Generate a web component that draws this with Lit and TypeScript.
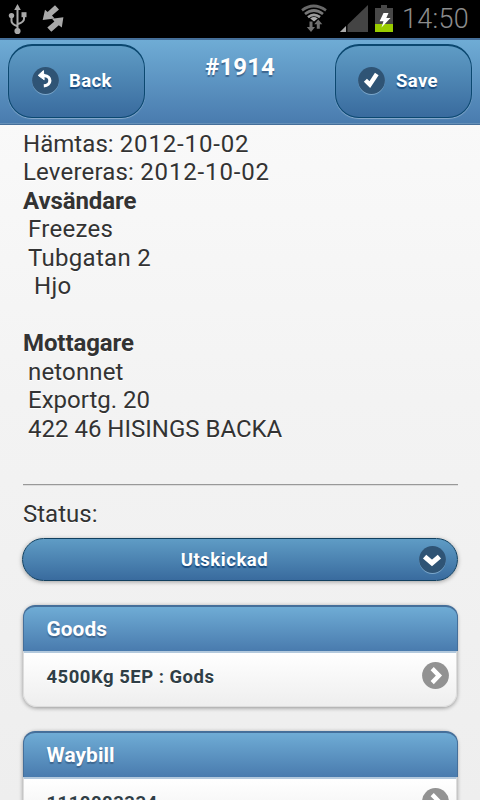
import { LitElement, html, css, svg } from "lit";
import { customElement } from "lit/decorators.js";

const glyphs = {
  back: svg`<path d="M9.5 8.6 H12.4 C19.8 9 19.8 18.4 11.8 18.9" stroke-width="3.2"/><path d="M6.2 8.4 L11.4 3.6 L12.2 12.8 Z" fill="#fff"/>`,
  check: svg`<path d="M7.4 13.2 L11.8 17.6 L18.8 7" stroke-width="4.4"/>`,
  down: svg`<path d="M5.6 10.6 L13 17 L20.4 10.6" stroke-width="5"/>`,
  right: svg`<path d="M10.2 6.6 L17 13.6 L10.2 20.6" stroke-width="4.4"/>`,
};

const disc = (name: keyof typeof glyphs, tone = "dark") => html`
  <svg class="disc ${tone}" width="27" height="28" viewBox="0 0 27 28">
    <circle class="edge" cx="13.5" cy="14.6" r="13.3" />
    <circle class="face" cx="13.5" cy="13.5" r="13.4" />
    <g fill="none" stroke="#fff">${glyphs[name]}</g>
  </svg>
`;

const details = [
  { text: "Hämtas:", date: "2012-10-02" },
  { text: "Levereras:", date: "2012-10-02", kind: "wide" },
  { text: "Avsändare", kind: "strong" },
  { text: "Freezes", kind: "in" },
  { text: "Tubgatan 2", kind: "in" },
  { text: "Hjo", kind: "in2" },
  { text: "" },
  { text: "Mottagare", kind: "strong" },
  { text: "netonnet", kind: "in snug" },
  { text: "Exportg. 20", kind: "in tight" },
  { text: "422 46 HISINGS BACKA", kind: "in tight" },
];

const lists = [
  { title: "Goods", item: "4500Kg 5EP : Gods" },
  { title: "Waybill", item: "1110003334" },
];

@customElement("app-root")
export class AppRoot extends LitElement {
  static styles = css`
    :host {
      display: block;
      height: 800px;
      overflow: hidden;
      font-family: Roboto, "Liberation Sans", sans-serif;
      color: #333;
      background: linear-gradient(#f9f9f9 120px, #f3f3f3 400px, #eee 800px);
    }
    * { box-sizing: border-box; }
    svg { display: block; flex: none; }
    .status {
      height: 38px;
      background: #000;
      display: flex;
      align-items: flex-start;
      justify-content: space-between;
    }
    .clock {
      width: 78px;
      font-size: 27px;
      line-height: 39px;
      color: #8c8c8c;
      font-weight: 300;
      letter-spacing: 0.3px;
    }
    .tray { display: flex; }
    header {
      height: 87px;
      padding: 4px 8px 0 8px;
      display: flex;
      justify-content: space-between;
      border-top: 2px solid #456f9a;
      border-bottom: 1px solid #456f9a;
      background: linear-gradient(#6facd5, #497bae);
      box-shadow: inset 0 -1px #6590b8;
      color: #fff;
    }
    h1 {
      margin: 9px 0 0;
      font-size: 24px;
      line-height: 28px;
      font-weight: 700;
      letter-spacing: 0.1px;
      text-shadow: 0 2px 1px #3e6790;
    }
    .btn {
      width: 137px;
      height: 74px;
      border: 1px solid #0b4870;
      border-top-width: 2px;
      border-radius: 24px;
      background: linear-gradient(#5f9cc5, #396b9e);
      box-shadow: 0 1px 1px rgba(255, 255, 255, 0.35);
      display: flex;
      align-items: center;
      padding: 0 0 1px 22.5px;
      gap: 10.5px;
      font-size: 18.5px;
      font-weight: 700;
      letter-spacing: 0.4px;
      text-shadow: 0 2px 1px #194b7e;
    }
    .disc .face { fill: #2f5475; }
    .disc .edge { fill: #7ba7cb; }
    .disc.grey .face { fill: #929292; }
    .disc.grey .edge { fill: none; }
    main { padding: 4.6px 22px 0 23px; }
    .line {
      height: 28.5px;
      font-size: 24px;
      line-height: 28.5px;
      letter-spacing: 0.3px;
      text-shadow: 0 1px 0 #fff;
      white-space: pre;
    }
    .dated { letter-spacing: 0.05px; }
    .wide { letter-spacing: 0.18px; }
    .date { letter-spacing: 0.85px; }
    .strong { font-weight: 700; letter-spacing: -0.1px; }
    .in { padding-left: 5px; }
    .in2 { padding-left: 11px; }
    .snug { letter-spacing: 0.15px; }
    .tight { letter-spacing: 0; }
    hr {
      margin: 41px 0 0;
      border: 0;
      height: 2px;
      background: linear-gradient(#999 50%, #ddd 50%);
    }
    .label { margin-top: 14px; letter-spacing: 0; }
    .select {
      margin: 9.5px 0 0 -1px;
      height: 43px;
      border: 1px solid #11405f;
      border-radius: 22px;
      background: linear-gradient(#5f9cc5, #396b9e);
      box-shadow: 0 1px 4px rgba(0, 0, 0, 0.35);
      display: flex;
      align-items: center;
      padding: 0 11px 0 0;
      color: #fff;
      font-size: 18.5px;
      font-weight: 700;
      letter-spacing: 0.55px;
      text-shadow: 0 2px 1px #194b7e;
    }
    .select span { flex: 1; text-align: center; padding: 0 0 0 7px; }
    .card {
      margin: 23.5px 1px 0 0;
      height: 102px;
      border-radius: 14px;
      box-shadow: 0 1px 4px rgba(0, 0, 0, 0.4);
    }
    .card + .card { margin-top: 24px; }
    .card h2 {
      margin: 0 -1px 0 0;
      height: 46px;
      padding-left: 22.5px;
      border: 1px solid #456f9a;
      border-top: 2px solid #456f9a;
      border-bottom: 0;
      border-radius: 12px 12px 0 0;
      background: linear-gradient(#6facd5, #497bae);
      color: #fff;
      font-size: 20.8px;
      line-height: 44px;
      letter-spacing: 0.1px;
      text-shadow: 0 2px 1px #3e6790;
    }
    .row {
      height: 56px;
      border: 1px solid #ddd;
      border-top: 2px solid #b3c9dd;
      border-radius: 0 0 14px 14px;
      background: linear-gradient(#fff, #eee);
      display: flex;
      justify-content: space-between;
      align-items: flex-start;
      padding: 9px 7px 0 22.5px;
      font-size: 18.5px;
      line-height: 30px;
      font-weight: 700;
      letter-spacing: 0.5px;
      text-shadow: 0 1px #fff;
      color: #2f3e46;
    }
  `;

  render() {
    return html`
      <div class="status">
        <svg width="70" height="38" viewBox="0 0 70 38">
          <g fill="none" stroke="#a9a9a9" stroke-width="2">
            <path d="M17.5 9 V30 M11.5 17 V21 Q11.5 24 17 26 M24 16 V19 Q24 22 18 24" />
          </g>
          <g fill="#a9a9a9">
            <path d="M17.5 4 L20.8 10 H14.2 Z" />
            <circle cx="11.5" cy="15.6" r="2.7" />
            <rect x="21.5" y="12.2" width="5" height="5" />
            <circle cx="17.5" cy="31" r="3.1" />
            <path d="M55 5.3 L59 9.4 L52 15.4 L54.6 18.4 L42.7 20 L45 9.8 L47.6 12 Z" />
            <path d="M51.3 31.8 L47.3 27.6 L54.4 21.6 L52 18.8 L63.4 17.3 L61.8 27.6 L58.8 25.2 Z" />
          </g>
        </svg>
        <div class="tray">
          <svg width="103" height="38" viewBox="300 0 103 38">
            <g fill="none" stroke="#686868" stroke-width="2.7">
              <path d="M303 10.3 Q314.5 1.7 327 10.3" />
              <path d="M306 14 Q314.8 7 324 14" stroke="#777" />
              <path d="M309 17.2 Q314.8 12.6 321 17.2" stroke="#999" />
            </g>
            <path d="M311.2 18.4 Q314.9 15.7 318.8 18.4 L315 21.6 Z" fill="#aaa" />
            <g fill="#707070">
              <path d="M310.5 21.5 H313.5 V27 H316 L312 32 L307.8 27 H310.5 Z" />
              <path d="M317.8 28.8 H320.8 V24.3 H323.3 L319.3 19.5 L315.2 24.3 H317.8 Z" />
            </g>
            <path d="M369 5 V32 H341 Z" fill="#444" />
            <path d="M347 26 V32 H341 Z" fill="#aaa" />
            <path d="M347.8 24 V32" stroke="#000" stroke-width="1.3" />
            <path d="M382 5 H388 V8 H394 V24 H376 V8 H382 Z" fill="#484848" />
            <rect x="376" y="24" width="18" height="8" fill="#99cc00" />
            <path d="M384.5 13 H389.5 L387.3 18 H391.5 L382.5 27.5 L384.5 21.2 H380.6 Z" fill="#fff" />
          </svg>
          <div class="clock">14:50</div>
        </div>
      </div>
      <header>
        <div class="btn">${disc("back")}<span>Back</span></div>
        <h1>#1914</h1>
        <div class="btn">${disc("check")}<span>Save</span></div>
      </header>
      <main>
        ${details.map((d) =>
          d.date
            ? html`<div class="line dated ${d.kind ?? ""}">${d.text} <span class="date">${d.date}</span></div>`
            : html`<div class="line ${d.kind ?? ""}">${d.text}</div>`
        )}
        <hr />
        <div class="line label">Status:</div>
        <div class="select"><span>Utskickad</span>${disc("down")}</div>
        ${lists.map(
          (l) => html`
            <section class="card">
              <h2>${l.title}</h2>
              <div class="row"><span>${l.item}</span>${disc("right", "grey")}</div>
            </section>
          `
        )}
      </main>
    `;
  }
}
